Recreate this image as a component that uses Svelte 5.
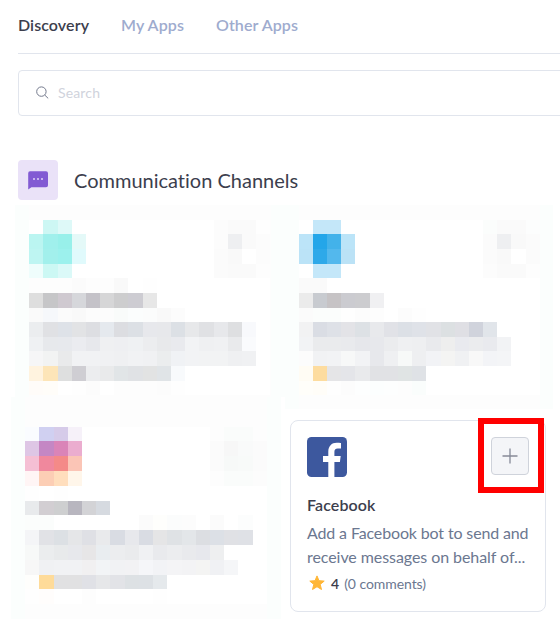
<script>
  const previews = [
    {
      kind: 'first',
      cols: [14, 15, 14, 14, 14, 14, 14, 15, 14, 14, 14, 14, 15, 14, 14, 14, 14],
      rows: [14, 15, 15, 14, 15, 15, 14, 15, 14, 15, 15, 14],
      cells: [
        '- cdf7f4 def9f8 - - - - - - - - - - fcfcfc fafafa fafafa fefefe',
        'bbf5f1 a0f0ec 98f0ea e4f9f8 - - - - - - - - - fcfcfc eeeff1 fafafa fcfcfc',
        'bef5f2 a2f0ec 9cf1ed e0fafc - - - - - - - - - fbfbfb f9f9f9 - fcfcfc',
        'effdfc ccf8f4 dbf9f8 - - - - - - - - - - fbfbfb fafafa fafafa fdfdfd',
        'fdfdfd fdfdfd fdfdfd fbfbfb fdfdfd fdfdfd f9f9f9 - fefefe - - - - - - - -',
        'dedede c6c6c8 cfc9d0 d6d7db c4c2c8 d6d6d7 cdcdce cdccd2 e7e7e7 - - - - - - - -',
        'fafafa f6f8fb fbfbfb f9f9f9 fcfcfc fcfcfc f9fbfa fbfdfd fbfcfc f9f9f9 fcfcfc - - - - - -',
        'ebedef e0e1e4 dee2e8 e2e3e5 dddee2 e5e9ee dcdde1 dce0e5 e7e8ec e7e8eb dce0e5 e7e8ea e0e1e4 e7e8eb dedfe1 f8f9fc -',
        'eff1f3 e7e9ec e7e9ed ebecf0 e7e8ec eff0f2 eeeff2 eff1f3 ecedef e8e9eb e9eaee f2f3f5 eff0f2 f0f1f3 e9eaec fafbfd -',
        'f6f6f7 f2f3f3 e9eaeb f1f2f4 f1f2f4 f0f1f3 eff0f2 f1f2f4 f0f1f3 ebedee f0f2f5 f2f3f5 f2f3f4 f2f3f4 eff0f2 f0f1f3 -',
        'fff3df fde5b8 dedfdf cfced3 ecedef e9eaeb e1e5e7 e0e2e5 e2e3e3 e0e4e7 f8fafc - - - - - -',
        'fffcf9 fffdf9 - fefefe fcfcfc - fdfdfd fdfdfd fdfdfd fcfcfc fefefe - - - - - -'
      ]
    },
    {
      kind: 'second',
      cols: [14, 14, 14, 14, 15, 14, 14, 14, 14, 15, 14, 14, 14, 14, 14, 15, 14],
      rows: [14, 15, 15, 14, 15, 15, 14, 15, 14, 15, 15, 14],
      cells: [
        '- c4e7f9 c4e7f9 - - - - - - - - - - fbfdfc fafafa fafafa fcfdfd',
        'bce4f8 24a6e9 43b2ea bbe4f8 - - - - - - - - - fbfbfb eeeff1 f9f9f9 fbfbfb',
        'bbe3f7 2ea9e9 53b8ed bbe2f6 - - - - - - - - - fbfbfb f9f9f9 - fbfbfb',
        '- c4e7f9 c4e7f9 - - - - - - - - - - fcfcfc fafafa fafafa fdfdfd',
        'fafafa fafafa - - - - - - - - - - - - - - -',
        'ebebeb c8cbd0 c6c3c5 cbcbd0 cccccf f0f0f2 - - - - - - - - - - -',
        'fbfbfb fbfdfc fbfdfc fefefe fcfcfc fdfdfd - fcfcfc fefefe - - - - - - - -',
        'f2f2f3 dadde4 dee1e7 e3e3e7 dde1e5 e8e9ec e1e2e7 dce0e6 dfe2e8 e1e2e6 dce0e2 dfdfe4 d0d3dc e1e5ea - - -',
        'f2f3f5 eaebed eaebed e9eaed e6e7eb e7e8ec ebecee eff0f2 eeeff1 e9eaed eeeeee e9eaef ebecee e9eaee f2f3f5 - -',
        'fcfcfc f1f2f4 f2f3f5 f7f8f8 f2f3f5 e7e8ec eff0f2 f7f9f8 eeeff1 f2f3f6 f4f4f3 f0f1f3 f8f8f8 f3f4f7 f4f5f7 - -',
        'fffcf4 fddc9f e5e5e7 e4e5e9 e9eaec e1e2e5 e1e2e5 e0e4e4 dfe2e6 - - - - - - - -',
        'fffefa fffdf8 fefefe fcfcfc fdfefe fcfefe fdfefe fdfdfd fafdfc - - - - - - - -'
      ]
    },
    {
      kind: 'third',
      cols: [14, 15, 14, 14, 14, 14, 15, 14, 14, 14, 15, 14, 14, 14, 14, 15, 14],
      rows: [14, 15, 15, 15, 15, 14, 15, 15, 15, 15, 14, 15],
      cells: [
        'fafcff d0d0f1 d6cbe9 f6f1f9 - - - - - - - - - fdfdfd fafcfb fafcfb fdfdfd',
        'dec6e5 c487c4 da84b8 ebadcf - - - - - - - - - fbfbfb f7f7f7 f9fafa fbfbfb',
        'f5bfd4 f0889d f48a88 fbc5b6 - - - - - - - - - fbfbfb f7f9f8 f8faf9 fbfbfb',
        'fff5f5 fcceb5 ffdebd fff6ea - - - - - - - - - fdfdfd fafcfb fafcfb fcfcfc',
        'fefefe - fefefe - - - - - - - - - - - - - -',
        'e8eaec d2ced2 cecfd0 b8b6bf d3d3d6 d6dae0 - - - - - - - - - - -',
        'fbfdfc fbfdfc - - - - - - fbfbfb fefefc fbfcfc fcfcfc - fbfbfb - fcfdfd -',
        'f4f5f7 e1e2e6 dce0e4 e5e6e8 dfe0e5 e9eaec d9dce3 e7e8ec d9dce3 e5e5e6 dfe2e5 e3e6e9 dcdee2 dce0e6 e0e1e5 dfe1e6 -',
        'f7f9f8 ebedee e8eaeb e7e8ec e7e6e7 e9edf0 ecedef eaebed f0f1f3 e9eaed ecedef e9eaed e7e8ed eeeff0 - - -',
        'f7f7f7 f0f1f3 f1f2f4 f1f2f4 f1f0f1 f2f4f6 f1f2f4 f2f2f4 f5f6f9 f2f3f6 f4f4f6 f3f3f5 f4f4f3 f0f1f4 f5f6f8 - -',
        'fefefc fedb99 e1e1e2 e1e1e2 e0e1e6 e6e7e9 e2e3e7 dde1e4 dde1e5 e5e9ec - - - - - - -',
        'fefefe fffdfc - - fdfdfd - - - - fefefe - - - - - - -'
      ]
    }
  ];
  const tracks = (sizes) => sizes.map((n) => n + 'px').join(' ');
</script>

{#snippet mosaic(p)}
  <div class="preview {p.kind}" aria-hidden="true">
    <div class="mosaic" style="grid-template-columns:{tracks(p.cols)};grid-template-rows:{tracks(p.rows)}">
      {#each p.cells as row}
        {#each row.split(' ') as c}
          <i style="background:{c === '-' ? '#fff' : '#' + c}"></i>
        {/each}
      {/each}
    </div>
  </div>
{/snippet}

<main>
  <nav>
    <a class="active" href="#discovery">Discovery</a>
    <a href="#my">My Apps</a>
    <a href="#other">Other Apps</a>
  </nav>
  <label class="search">
    <svg width="14" height="14" viewBox="0 0 14 14" fill="none" stroke="#73798c" stroke-width="1">
      <circle cx="5.4" cy="5.6" r="4.7" /><path d="M8.8 9.1 12.2 12.4" />
    </svg>
    <input type="text" placeholder="Search" />
  </label>
  <header>
    <span class="badge">
      <svg width="20" height="19" viewBox="0 0 20 19">
        <path fill="#825ad3" d="M2 0.3h16a2 2 0 0 1 2 2v12a2 2 0 0 1-2 2H3.4L0.2 18.5V2.3a2 2 0 0 1 1.8-2z" />
        <path fill="#c7b4ec" d="M5 7h2v2H5zM9 7h2v2H9zM13 7h2v2h-2z" />
      </svg>
    </span>
    <h2>Communication Channels</h2>
  </header>
  <section class="channels">
    <div class="left">
      {@render mosaic(previews[0])}
      {@render mosaic(previews[2])}
    </div>
    <div class="right">
      {@render mosaic(previews[1])}
      <article>
        <div class="top">
          <svg width="40" height="40" viewBox="0 0 40 40">
            <rect width="40" height="40" rx="4.5" fill="#3d589e" />
            <path fill="#fff" d="M21.3 40V25H16v-6h5.3v-4.4c0-5.4 3.3-8.8 8.4-8.8 1.8 0 3.4.1 4.3.3v5.5h-3.2c-2.6 0-3.4 1.3-3.4 3.3V19h6.3l-.8 6h-5.5v15z" />
          </svg>
          <button aria-label="Add Facebook">
            <svg width="16" height="16" viewBox="0 0 16 16"><path d="M8 .5v15M.5 8h15" stroke="#868997" stroke-width="1.3" /></svg>
            <span class="highlight"></span>
          </button>
        </div>
        <h3>Facebook</h3>
        <p><span class="line1">Add a Facebook bot to send and</span><br /><span class="line2">receive messages on behalf of...</span></p>
        <div class="rating">
          <svg width="16" height="16" viewBox="0 0 16 16">
            <path fill="#ffb636" stroke="#ffb636" stroke-width="1" stroke-linejoin="round" d="M8 .9l2 4.8 5.2.4-4 3.3 1.3 5.1L8 11.7l-4.5 2.8 1.3-5.1-4-3.3L6 5.7z" />
          </svg>
          <b>4</b><span>(0 comments)</span>
        </div>
      </article>
    </div>
  </section>
</main>

<style>
  :global(body) { margin: 0; background: #fff; overflow: hidden; }
  main {
    width: 560px; height: 625px; overflow: hidden; background: #fff;
    font-family: Lato, "Liberation Sans", sans-serif; color: #3c3e4d;
    font-variant-ligatures: none;
  }
  nav {
    display: flex; gap: 32px; height: 53px; margin-left: 18px; box-sizing: content-box;
    border-bottom: 1px solid #e1e5ed; align-items: center;
  }
  nav a { color: #9eabce; font-size: 16px; font-weight: 600; letter-spacing: 0.09px; line-height: 24px; text-decoration: none; padding-bottom: 3px; }
  nav a.active { color: #3c3e4d; }
  .search {
    display: flex; align-items: center; box-sizing: border-box; width: 580px; height: 46px;
    margin: 16px 0 0 18px; padding-left: 17px; border: 1px solid #e1e5ed; border-radius: 4px;
  }
  .search svg { flex: none; }
  input { border: 0; outline: 0; padding: 0 0 2px; margin-left: 8px; font: 14px Lato, sans-serif; letter-spacing: 0.15px; background: none; }
  input::placeholder { color: #d0d3dc; opacity: 1; }
  header { display: flex; align-items: center; gap: 16px; margin: 44px 0 0 18px; height: 40px; }
  .badge { width: 40px; height: 40px; border-radius: 4px; background: #eae2f8; display: flex; align-items: center; justify-content: center; }
  h2 { margin: 0; font-size: 20px; font-weight: 400; line-height: 28px; }
  .channels { display: flex; margin-top: 5px; }
  .left { width: 285px; }
  .right { width: 275px; }
  .preview { box-sizing: border-box; background: #fdfdfd; border: 0 solid #fbfefd; border-width: 0 14px; }
  .first { width: 270px; height: 192px; margin-left: 15px; padding-top: 15px; }
  .second { width: 268px; height: 204px; padding-top: 15px; border-right-width: 13px; }
  .third { width: 270px; height: 222px; margin-left: 11px; padding-top: 30px; }
  .mosaic { display: grid; width: max-content; }
  article {
    box-sizing: border-box; width: 256px; height: 192px; margin: 11px 0 0 5px; padding: 16px;
    border: 1px solid #e1e5ed; border-radius: 8px; background: #fff;
  }
  .top { display: flex; justify-content: space-between; align-items: flex-start; height: 40px; }
  button {
    position: relative; display: flex; align-items: center; justify-content: center;
    width: 38px; height: 38px; padding: 0; border: 1px solid #cfd3db; border-radius: 4px; background: #f4f5f8;
  }
  .highlight { position: absolute; left: -14px; top: -20px; width: 54px; height: 63px; border: 6px solid #f00; }
  h3 { margin: 16px 0 0; font-size: 16px; line-height: 24px; font-weight: 600; letter-spacing: 0.1px; }
  p { margin: 4px 0 0; font-size: 16px; line-height: 24px; color: #6b7790; white-space: nowrap; }
  .line1 { letter-spacing: -0.14px; }
  .line2 { letter-spacing: -0.07px; }
  .rating { display: flex; align-items: center; height: 24px; margin-top: 2px; padding-left: 2px; font-size: 14px; color: #6b7790; }
  .rating b { margin: 0 5px 0 6px; color: #3c3e4d; font-weight: 600; }
  .rating span { letter-spacing: -0.06px; }
</style>
